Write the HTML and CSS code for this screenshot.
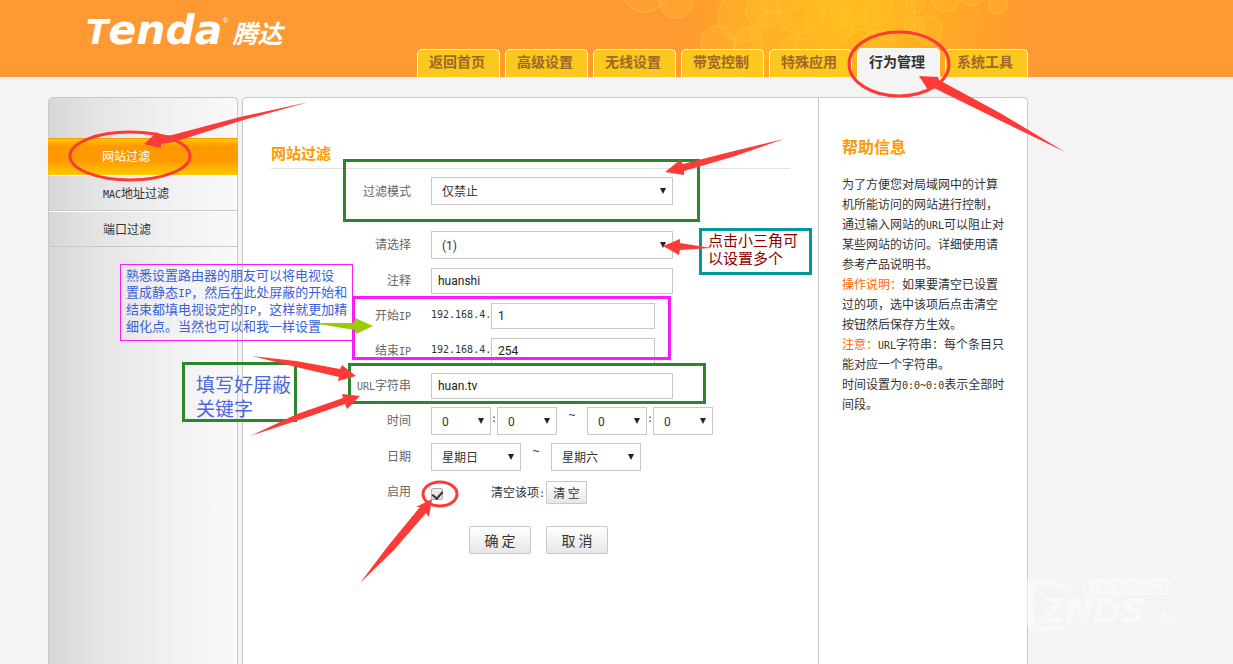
FILE: index.html
```html
<!DOCTYPE html>
<html lang="zh-CN">
<head>
<meta charset="utf-8">
<title>Tenda 腾达 - 网站过滤</title>
<link rel="stylesheet" href="styles.css">
</head>
<body>
<header class="header">
  <svg class="bubbles" width="420" height="77" viewBox="620 0 420 77" aria-hidden="true">
    <defs>
      <radialGradient id="glow" gradientUnits="userSpaceOnUse" cx="850" cy="20" r="180">
        <stop offset="0" stop-color="#ffbc1c"/>
        <stop offset="0.4" stop-color="#ffae22"/>
        <stop offset="1" stop-color="#ff9933"/>
      </radialGradient>
    </defs>
    <rect x="670" y="0" width="370" height="77" fill="url(#glow)"/>
    <g fill="#ffc72e" fill-opacity="0.18" stroke="#ffd040" stroke-opacity="0.36" stroke-width="1.5">
      <circle cx="645" cy="-11" r="23"/><circle cx="676" cy="2" r="16"/>
      <circle cx="743" cy="17" r="25"/><circle cx="763" cy="11" r="17"/>
      <circle cx="718" cy="43" r="17"/><circle cx="748" cy="42" r="14"/>
      <circle cx="780" cy="-22" r="35"/><circle cx="775" cy="35" r="24"/>
      <circle cx="829" cy="23" r="24"/><circle cx="796" cy="52" r="16"/>
      <circle cx="801" cy="10" r="24"/><circle cx="860" cy="-4" r="34"/>
      <circle cx="890" cy="15" r="25"/><circle cx="915" cy="27" r="10"/>
      <circle cx="928" cy="30" r="14"/><circle cx="915" cy="4" r="9"/>
      <circle cx="945" cy="-2" r="14"/><circle cx="972" cy="-8" r="13"/>
      <circle cx="998" cy="5" r="9"/><circle cx="878" cy="49" r="18"/>
    </g>
  </svg>
  <div class="header-inner">
    <a class="logo" href="#"><span class="logo-t">T</span><span class="logo-rest">enda</span><sup class="logo-reg">®</sup><span class="logo-cn">腾达</span></a>
    <nav class="tabs">
      <a class="tab" href="#">返回首页</a>
      <a class="tab" href="#">高级设置</a>
      <a class="tab" href="#">无线设置</a>
      <a class="tab" href="#">带宽控制</a>
      <a class="tab" href="#">特殊应用</a>
      <a class="tab active" href="#">行为管理</a>
      <a class="tab" href="#">系统工具</a>
    </nav>
  </div>
</header>

<div class="layout">
  <nav class="sidebar">
    <a class="side-item active" href="#">网站过滤</a>
    <a class="side-item" href="#"><span class="mono">MAC</span>地址过滤</a>
    <a class="side-item" href="#">端口过滤</a>
  </nav>
  <div class="panel">
    <main class="content">
      <h1 class="title">网站过滤</h1>
      <form class="form">
        <div class="row row-mode">
          <label class="label" for="mode">过滤模式</label>
          <span class="select wide"><select id="mode"><option>仅禁止</option></select></span>
        </div>
        <div class="row">
          <label class="label" for="item">请选择</label>
          <span class="select wide"><select id="item"><option>(1)</option></select></span>
        </div>
        <div class="row">
          <label class="label" for="note">注释</label>
          <input class="text wide" id="note" type="text" value="huanshi">
        </div>
        <div class="row">
          <label class="label" for="ip-start">开始<span class="mono">IP</span></label>
          <span class="prefix mono">192.168.4.</span>
          <input class="text ip" id="ip-start" type="text" value="1">
        </div>
        <div class="row">
          <label class="label" for="ip-end">结束<span class="mono">IP</span></label>
          <span class="prefix mono">192.168.4.</span>
          <input class="text ip" id="ip-end" type="text" value="254">
        </div>
        <div class="row">
          <label class="label" for="url"><span class="mono">URL</span>字符串</label>
          <input class="text wide" id="url" type="text" value="huan.tv">
        </div>
        <div class="row row-range">
          <label class="label" for="h1">时间</label>
          <span class="select hour"><select id="h1"><option>0</option></select></span>
          <span class="colon mono">:</span>
          <span class="select hour"><select aria-label="开始分钟"><option>0</option></select></span>
          <span class="tilde">~</span>
          <span class="select hour"><select aria-label="结束小时"><option>0</option></select></span>
          <span class="colon mono">:</span>
          <span class="select hour"><select aria-label="结束分钟"><option>0</option></select></span>
        </div>
        <div class="row row-range">
          <label class="label" for="d1">日期</label>
          <span class="select day"><select id="d1"><option>星期日</option></select></span>
          <span class="tilde">~</span>
          <span class="select day"><select aria-label="结束日期"><option>星期六</option></select></span>
        </div>
        <div class="row row-enable">
          <label class="label" for="enable">启用</label>
          <input class="check" id="enable" type="checkbox" checked>
          <span class="clear-label">清空该项<span class="mono">:</span></span>
          <button class="btn small" type="button">清 空</button>
        </div>
        <div class="actions">
          <button class="btn" type="button">确 定</button>
          <button class="btn" type="button">取 消</button>
        </div>
      </form>
    </main>
    <aside class="help">
      <h2 class="help-title">帮助信息</h2>
      <p>为了方便您对局域网中的计算机所能访问的网站进行控制，通过输入网站的<span class="mono">URL</span>可以阻止对某些网站的访问。详细使用请参考产品说明书。</p>
      <p><span class="key">操作说明：</span>如果要清空已设置过的项，选中该项后点击清空按钮然后保存方生效。</p>
      <p><span class="key">注意：</span><span class="mono">URL</span>字符串：每个条目只能对应一个字符串。</p>
      <p>时间设置为<span class="mono">0:0~0:0</span>表示全部时间段。</p>
    </aside>
  </div>
</div>

<div class="note note-ip">熟悉设置路由器的朋友可以将电视设<br>置成静态<span class="mono">IP</span>，然后在此处屏蔽的开始和<br>结束都填电视设定的<span class="mono">IP</span>，这样就更加精<br>细化点。当然也可以和我一样设置</div>
<div class="note note-key">填写好屏蔽<br>关键字</div>
<div class="note note-tri">点击小三角可<br>以设置多个</div>
<div class="note frame-mode"></div>
<div class="note frame-ip"></div>
<div class="note frame-url"></div>

<svg class="marks" width="1233" height="664" viewBox="0 0 1233 664" aria-hidden="true">
  <g fill="none" stroke="#fc3a38" stroke-width="3">
    <ellipse cx="899" cy="64" rx="50" ry="32"/>
    <ellipse cx="130" cy="156" rx="60" ry="24"/>
    <ellipse cx="440" cy="494" rx="17" ry="12"/>
  </g>
  <g fill="#fc3a38">
    <path d="M144 144L157 132L160 136L172 135L240 117L309 102L240 121L174 142L161 144L161 148Z"/>
    <path d="M919 76L938 77L939 80L1000 113L1065 152L995 118L934 88L928 90Z"/>
    <path d="M665 172L680 160L683 164L730 152L784 139L732 157L684 171L684 175Z"/>
    <path d="M663 246L680 239L680 243L711 248L680 250L679 255Z"/>
    <path d="M252 356L296 361L340 369L342 365L356 376L338 381L339 377L296 367Z"/>
    <path d="M250 436L297 414L343 398L342 394L360 396L347 409L345 404L299 420Z"/>
    <path d="M360 583L388 546L420 507L416 507L432 499L429 517L426 513L394 550Z"/>
  </g>
  <path fill="#99cc00" d="M312 323L354 323L355 318L373 326L356 334L355 330Z"/>
  <g fill="#ffffff" opacity="0.5">
    <path d="M1027 579C1045 577 1061 583 1072 590L1071 592C1056 586 1043 584 1035 585C1032 598 1033 616 1036 624C1045 628 1057 627 1068 625C1064 630 1048 633 1034 631L1027 626Z"/>
    <circle cx="1037" cy="567" r="2"/><circle cx="1063" cy="575" r="2"/>
    <path d="M1036 568L1045 582L1047 582L1038 567ZM1062 576L1057 586L1059 587L1064 576Z"/>
    <path fill-rule="evenodd" d="M1087 579H1167Q1171 579 1170 583L1168 592Q1167 595 1164 595H1091L1087 598V595Q1082 594 1083 591L1084 582Q1084 579 1087 579ZM1088 581Q1086 581 1086 583L1085 591Q1085 593 1087 593H1163Q1166 593 1166 591L1168 583Q1168 581 1166 581Z"/>
    <text class="wm-cn" x="1087" y="592">智能电视网</text>
    <text class="wm-name" x="1040" y="623">ZNDS</text>
    <text class="wm-com" x="1145" y="622">.com</text>
  </g>
</svg>
</body>
</html>
```

FILE: styles.css
```css
* { box-sizing: border-box; }

body {
  margin: 0;
  min-height: 100vh;
  display: flex;
  flex-direction: column;
  position: relative;
  overflow: hidden;
  background: #f4f4f4;
  color: #333;
  font: 12px/20px "Noto Sans CJK SC", sans-serif;
}

a { color: inherit; text-decoration: none; }
h1, h2, p { margin: 0; }
.mono { font: 10px/10px "DejaVu Sans Mono", monospace; }

/* header */
.header { position: relative; background: #ff9933; }
.bubbles { position: absolute; left: 620px; top: 0; }
.header-inner {
  position: relative;
  display: flex;
  justify-content: space-between;
  align-items: flex-end;
  height: 77px;
  max-width: 1028px;
  padding-left: 86px;
}
.logo {
  display: flex;
  align-items: baseline;
  align-self: flex-start;
  color: #fff;
  font: italic bold 41px/60px "DejaVu Sans", sans-serif;
}
.logo-t { font-size: 33px; }
.logo-reg { font: 8px/8px "Liberation Sans", sans-serif; align-self: flex-start; padding-top: 17px; }
.logo-cn { font: italic bold 25px/28px "Noto Sans CJK SC", sans-serif; padding-left: 4px; align-self: flex-start; padding-top: 18px; }

.tabs { display: flex; align-items: flex-end; gap: 5px; }
.tab {
  width: 83px;
  height: 28px;
  padding-right: 3px;
  border: 1px solid #fff6d8;
  border-bottom: 0;
  border-radius: 5px 5px 0 0;
  background: #fac81e;
  color: #a0662a;
  font-size: 14px;
  font-weight: bold;
  line-height: 23px;
  text-align: center;
}
.tab.active { height: 29px; background: #f4f4f4; border-color: #fff; color: #333; line-height: 25px; }

/* columns */
.layout { flex: 1; display: flex; gap: 4px; max-width: 1028px; width: 100%; padding: 20px 0 0 48px; }
.sidebar {
  width: 190px;
  padding-top: 40px;
  border: 1px solid #c8c8c8;
  border-bottom: 0;
  border-radius: 5px 5px 0 0;
  background: linear-gradient(to right, #d6d6d6, #e2e2e2 20%, #f0f0f0 60%, #f9f9f9);
}
.side-item {
  display: block;
  height: 36px;
  padding-left: 54px;
  border-top: 1px solid #fff;
  border-bottom: 1px solid #c8c8c8;
  color: #333;
  line-height: 34px;
}
.side-item.active {
  height: 37px;
  margin: 0 -1px;
  border-top-color: #eda000;
  border-bottom-color: #ffcc00;
  background: linear-gradient(#ffc800, #ff9900 20%, #ff9900 60%, #ffc400);
  color: #fff;
}
.panel {
  flex: 1;
  display: flex;
  border: 1px solid #c8c8c8;
  border-bottom: 0;
  border-radius: 5px 5px 0 0;
  background: #fff;
}
.content { flex: 1; padding: 43px 28px 0; }
.title {
  height: 28px;
  border-bottom: 1px solid #e2e2e2;
  color: #ff9900;
  font-size: 15px;
  line-height: 24px;
}

/* form */
.form { padding-top: 8px; display: flex; flex-direction: column; gap: 9px; }
.row { display: flex; align-items: center; }
.row-mode { margin-bottom: 17px; }
.row-range { margin-top: -1px; }
.row-enable { margin-top: 1px; }
.label { width: 140px; margin-right: 20px; color: #666; text-align: right; }
.row:not(.row-mode) .label, .prefix { padding-bottom: 3px; }
.prefix { width: 60px; }
.text {
  height: 26px;
  padding: 0 6px;
  border: 1px solid #c8c8c8;
  background: #fff;
  color: #222;
  font: 12px Roboto, "Noto Sans CJK SC", sans-serif;
}
.wide { width: 242px; }
.ip { width: 164px; }
.hour { width: 60px; }
.day { width: 90px; }
.select { position: relative; display: block; height: 28px; }
.select::after {
  content: "";
  position: absolute;
  right: 7px;
  top: 11px;
  border: solid transparent;
  border-width: 6px 3px 0;
  border-top-color: #222;
}
.select select {
  appearance: none;
  width: 100%;
  height: 100%;
  padding: 2px 10px 0;
  border: 1px solid #c8c8c8;
  border-radius: 0;
  background: #fff;
  color: #333;
  font: 12px Roboto, "Noto Sans CJK SC", sans-serif;
}
.colon { width: 6px; padding-bottom: 4px; }
.tilde { width: 30px; padding-bottom: 12px; text-align: center; font: 12px/16px "Liberation Sans", sans-serif; }
.check {
  appearance: none;
  width: 12px;
  height: 12px;
  margin: 3px 48px 0 0;
  border: 1px solid #aaa;
  border-radius: 2px;
  background: linear-gradient(#eee, #ddd);
  display: grid;
  place-items: center;
}
.check:checked::after {
  content: "";
  width: 5px;
  height: 8px;
  margin-bottom: 2px;
  border: solid #333;
  border-width: 0 2px 2px 0;
  transform: rotate(40deg);
}
.clear-label { width: 55px; padding-bottom: 2px; white-space: nowrap; }
.btn {
  width: 62px;
  height: 28px;
  padding: 0;
  border: 1px solid #c8c8c8;
  border-radius: 1px;
  background: linear-gradient(#fff, #e6e6e6);
  color: #333;
  font: 14px/24px "Noto Sans CJK SC", sans-serif;
}
.btn.small { width: 41px; height: 23px; font-size: 12px; line-height: 20px; }
.actions { display: flex; gap: 15px; padding: 13px 0 0 198px; }

/* help */
.help { width: 209px; padding: 36px 22px 0 23px; border-left: 1px solid #c8c8c8; }
.help-title { margin-bottom: 16px; color: #ff9900; font-size: 16px; line-height: 24px; }
.key { color: #ff6600; }

/* annotations */
.note { position: absolute; border: 3px solid #2e8530; }
.note-ip { left: 120px; top: 264px; width: 233px; height: 77px; padding: 1px 0 0 5px; border: 1px solid #f81cf8; color: #3a5fd9; font-size: 13px; line-height: 17px; white-space: nowrap; }
.note-ip .mono { font-size: 11px; }
.note-key { left: 182px; top: 362px; width: 115px; height: 60px; padding: 7px 0 0 11px; color: #4a68dc; font-size: 19px; line-height: 24px; white-space: nowrap; }
.note-tri { left: 699px; top: 228px; width: 113px; height: 47px; padding: 0 0 0 6px; border-color: #009999; color: #8b0000; font-size: 15px; line-height: 18px; white-space: nowrap; }
.frame-mode { left: 343px; top: 159px; width: 357px; height: 63px; }
.frame-ip { left: 352px; top: 296px; width: 319px; height: 64px; border-color: #f81cf8; }
.frame-url { left: 348px; top: 363px; width: 358px; height: 41px; }
.marks { position: absolute; left: 0; top: 0; pointer-events: none; }
.wm-cn { font: italic bold 15px "Noto Sans CJK SC", sans-serif; }
.wm-name { font: italic bold 34px "DejaVu Sans", sans-serif; }
.wm-com { font: italic bold 14px "DejaVu Sans", sans-serif; }
```
